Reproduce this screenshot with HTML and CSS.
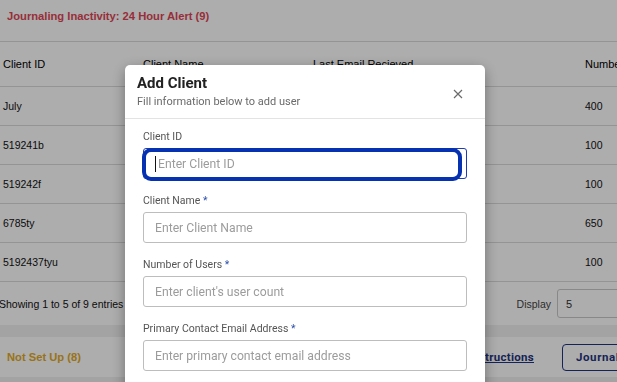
FILE: index.html
```html
<!DOCTYPE html>
<html lang="en">
<head>
<meta charset="utf-8">
<title>Add Client</title>
<link rel="stylesheet" href="styles.css">
</head>
<body>
<div class="page">
  <section class="card">
    <div class="card-title alert">Journaling Inactivity: 24 Hour Alert (9)</div>
    <table class="grid">
      <thead>
        <tr><th class="c1">Client ID</th><th class="c2">Client Name</th><th class="c3">Last Email Recieved</th><th class="c4">Number of Users</th></tr>
      </thead>
      <tbody>
        <tr><td>July</td><td></td><td></td><td>400</td></tr>
        <tr><td>519241b</td><td></td><td></td><td>100</td></tr>
        <tr><td>519242f</td><td></td><td></td><td>100</td></tr>
        <tr><td>6785ty</td><td></td><td></td><td>650</td></tr>
        <tr><td>5192437tyu</td><td></td><td></td><td>100</td></tr>
      </tbody>
    </table>
    <div class="table-foot">
      <span class="entries">Showing 1 to 5 of 9 entries</span>
      <div class="display">
        <span class="display-label">Display</span>
        <div class="select">5</div>
      </div>
    </div>
  </section>
  <section class="card card-row">
    <div class="card-title setup">Not Set Up (8)</div>
    <a class="link" href="#">Setup Instructions</a>
    <button class="outline-btn" type="button">Journaling Setup</button>
  </section>
</div>

<div class="backdrop"></div>

<div class="modal" role="dialog">
  <div class="modal-head">
    <div class="head-text">
      <h2 class="modal-title">Add Client</h2>
      <p class="modal-sub">Fill information below to add user</p>
    </div>
    <button class="close" type="button" aria-label="Close">
      <svg width="10" height="10" viewBox="0 0 10 10"><path d="M1 1L9 9M9 1L1 9" stroke="#6b6b6b" stroke-width="1.2" fill="none"/></svg>
    </button>
  </div>
  <div class="modal-body">
    <div class="field">
      <label class="label">Client ID</label>
      <div class="input-wrap">
        <div class="input focused"><span class="caret"></span>Enter Client ID</div>
        <span class="ring"></span>
      </div>
    </div>
    <div class="field">
      <label class="label">Client Name <span class="req">*</span></label>
      <div class="input">Enter Client Name</div>
    </div>
    <div class="field">
      <label class="label">Number of Users <span class="req">*</span></label>
      <div class="input">Enter client's user count</div>
    </div>
    <div class="field">
      <label class="label">Primary Contact Email Address <span class="req">*</span></label>
      <div class="input">Enter primary contact email address</div>
    </div>
  </div>
</div>
</body>
</html>
```
FILE: styles.css
```css
html, body {
  margin: 0;
  padding: 0;
  overflow: hidden;
  height: 100%;
}
body {
  background: #f0f0f0;
  font-family: "Liberation Sans", Arial, sans-serif;
  color: #1a1a1a;
}
.page {
  width: 720px;
}
.card {
  background: #fff;
}
.card + .card {
  margin-top: 12px;
}
.card-title {
  font-family: "Liberation Sans", Arial, sans-serif;
  font-weight: bold;
  font-size: 11.2px;
}
.alert {
  color: #e04556;
  height: 42px;
  box-sizing: border-box;
  padding: 10px 7px 0;
  line-height: 13px;
  border-bottom: 1px solid #dadada;
}
.grid {
  border-collapse: collapse;
  width: 720px;
  table-layout: fixed;
  font-size: 10.5px;
}
.grid th {
  text-align: left;
  font-weight: normal;
  font-size: 11px;
  color: #000;
  height: 44px;
  padding: 0 0 0 3px;
  border-bottom: 1px solid #dadada;
}
.grid td {
  height: 38px;
  padding: 0 0 0 3px;
  border-bottom: 1px solid #dadada;
  color: #111;
}
.grid .c1 { width: 137px; }
.grid .c2 { width: 167px; }
.grid .c3 { width: 269px; }
.table-foot {
  height: 43px;
  display: flex;
  align-items: center;
  justify-content: space-between;
  font-size: 10.5px;
}
.entries {
  margin-left: -1px;
  color: #111;
}
.display {
  display: flex;
  align-items: center;
  gap: 6px;
  margin-right: 55px;
}
.display-label {
  color: #444;
  font-size: 10.5px;
}
.select {
  width: 98px;
  height: 27px;
  border: 1px solid #c9c9c9;
  border-radius: 3px;
  box-sizing: content-box;
  padding-left: 8px;
  display: flex;
  align-items: center;
  font-size: 11px;
  color: #333;
}
.card-row {
  height: 40px;
  display: flex;
  align-items: center;
  padding: 0 18px 0 7px;
  gap: 28px;
}
.setup {
  color: #e2a926;
}
.link {
  margin-left: auto;
  font-family: Roboto, sans-serif;
  font-weight: bold;
  font-size: 11.5px;
  color: #1f3480;
  letter-spacing: 0.3px;
}
.outline-btn {
  width: 140px;
  height: 27px;
  border: 1px solid #1f3480;
  border-radius: 4px;
  background: #fff;
  color: #1f3480;
  font-family: Roboto, sans-serif;
  font-weight: bold;
  font-size: 11.5px;
  letter-spacing: 0.6px;
  text-align: left;
  padding: 0 0 0 13px;
}
.backdrop {
  position: fixed;
  inset: 0;
  background: rgba(0, 0, 0, 0.32);
}
.modal {
  position: fixed;
  left: 125px;
  top: 65px;
  width: 360px;
  height: 400px;
  background: #fff;
  border-radius: 5px;
  box-shadow: 0 4px 14px rgba(0, 0, 0, 0.35);
  font-family: Roboto, sans-serif;
}
.modal-head {
  display: flex;
  align-items: flex-start;
  justify-content: space-between;
  padding: 9px 22px 8px 12px;
  border-bottom: 1px solid #e3e3e3;
}
.modal-title {
  margin: 0;
  font-size: 15px;
  line-height: 18px;
  font-weight: 700;
  color: #222;
}
.modal-sub {
  margin: 2px 0 0;
  font-size: 11px;
  line-height: 16px;
  color: #6a6a6a;
}
.close {
  border: 0;
  background: none;
  padding: 0;
  margin-top: 15px;
  width: 10px;
  height: 10px;
  display: flex;
}
.modal-body {
  padding: 11px 18px 0;
  display: flex;
  flex-direction: column;
  gap: 15px;
}
.field {
  display: flex;
  flex-direction: column;
  gap: 4px;
}
.label {
  font-size: 10.5px;
  line-height: 14px;
  color: #555;
}
.req {
  color: #2d4fa6;
}
.input-wrap {
  position: relative;
}
.input {
  height: 31px;
  box-sizing: border-box;
  border: 1px solid #bdbdbd;
  border-radius: 3px;
  padding-left: 11px;
  display: flex;
  align-items: center;
  font-size: 12.2px;
  color: #9c9c9c;
}
.input.focused {
  border-color: #1f3cb0;
}
.caret {
  width: 1px;
  height: 16px;
  background: #111;
  margin-right: 2px;
}
.ring {
  position: absolute;
  left: -1px;
  top: 0;
  width: 320px;
  height: 33px;
  box-sizing: border-box;
  border: 4px solid #0632b2;
  border-radius: 9px;
}
```
